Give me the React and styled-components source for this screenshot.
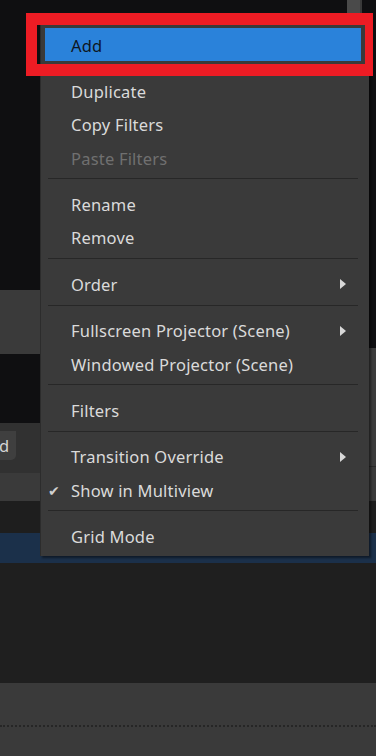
import React from 'react'
import styled, { createGlobalStyle } from 'styled-components'

const Global = createGlobalStyle`
  html, body {
    margin: 0;
    padding: 0;
    background: #0f0f11;
  }
  body {
    font-family: "Noto Sans", "Open Sans", sans-serif;
    overflow: hidden;
  }
`

const Screen = styled.div`
  position: relative;
  width: 376px;
  height: 756px;
  overflow: hidden;
  display: flex;
  flex-direction: column;
  background: #0f0f11;
`

const Docks = styled.div`
  display: flex;
  height: 503px;
`

const Column = styled.div`
  display: flex;
  flex-direction: column;
  width: ${p => p.width}px;
  flex: ${p => (p.width ? 'none' : 1)};
`

const Block = styled.div`
  height: ${p => (p.h ? `${p.h}px` : 'auto')};
  flex: ${p => (p.h ? 'none' : 1)};
  background: ${p => p.bg};
  border-bottom: ${p => (p.line ? '1px solid #2a2a2a' : 'none')};
  box-sizing: border-box;
`

const ScrollTrack = styled.div`
  height: 13px;
  display: flex;
  justify-content: flex-end;
  padding-right: 7px;
`

const ScrollThumb = styled.div`
  width: 13px;
  background: #4a4a4a;
  border-right: 2px solid #3a3a3a;
`

const DockBar = styled.div`
  height: 50px;
  background: #313131;
  padding-top: 8px;
  box-sizing: border-box;
`

const DockButton = styled.div`
  width: 16px;
  height: 29px;
  background: #3f3f3f;
  border-radius: 0 0 5px 0;
  color: #d4d4d4;
  font-size: 16.5px;
  line-height: 29px;
  text-indent: -1px;
  overflow: hidden;
`

const Row = styled.div`
  height: ${p => p.h}px;
  flex: none;
  background: ${p => p.bg};
  border-bottom: ${p => (p.dashed ? '2px dotted #262626' : 'none')};
`

const Menu = styled.div`
  position: absolute;
  left: 40px;
  top: 25px;
  width: 329px;
  padding: 3px 0 3.3px;
  box-sizing: border-box;
  background: #3a3a3a;
  border-left: 1px solid #2c2c2c;
  box-shadow: 2px 2px 2px rgba(0, 0, 0, 0.45);
  display: flex;
  flex-direction: column;
`

const Item = styled.div`
  position: relative;
  height: 33.36px;
  margin: 0 8px 0 4px;
  padding: 1px 0 0 26px;
  box-sizing: border-box;
  display: flex;
  align-items: center;
  font-size: 16.5px;
  letter-spacing: 0.2px;
  color: ${p => (p.disabled ? '#707070' : p.active ? '#0e1622' : '#dadada')};
  background: ${p => (p.active ? '#2a82da' : 'transparent')};
  white-space: nowrap;
`

const Check = styled.span`
  position: absolute;
  left: 3px;
  top: 50%;
  transform: translateY(-50%);
  font-size: 14px;
  color: #d0d0d0;
`

const Arrow = styled.span`
  position: absolute;
  right: 15px;
  top: 50%;
  margin-top: -4.5px;
  width: 0;
  height: 0;
  border-top: 5px solid transparent;
  border-bottom: 5px solid transparent;
  border-left: 6px solid #d8d8d8;
`

const Separator = styled.div`
  height: 13px;
  margin: 0 11px 0 7px;
  box-sizing: border-box;
  padding-top: 4px;
  &::after {
    content: '';
    display: block;
    height: 1px;
    background: #272727;
  }
`

const Highlight = styled.div`
  position: absolute;
  left: 26px;
  top: 13px;
  width: 347px;
  height: 63px;
  box-sizing: border-box;
  border-style: solid;
  border-color: #ed1c24;
  border-width: 12px 8px 12px 11px;
  pointer-events: none;
`

const menu = [
  { label: 'Add', active: true },
  'sep',
  { label: 'Duplicate' },
  { label: 'Copy Filters' },
  { label: 'Paste Filters', disabled: true },
  'sep',
  { label: 'Rename' },
  { label: 'Remove' },
  'sep',
  { label: 'Order', sub: true },
  'sep',
  { label: 'Fullscreen Projector (Scene)', sub: true },
  { label: 'Windowed Projector (Scene)' },
  'sep',
  { label: 'Filters' },
  'sep',
  { label: 'Transition Override', sub: true },
  { label: 'Show in Multiview', checked: true },
  'sep',
  { label: 'Grid Mode' },
]

export default function App() {
  return (
    <Screen>
      <Global />
      <Docks>
        <Column width={40}>
          <Block h={290} bg="#0f0f11" />
          <Block h={64} bg="#3a3a3a" />
          <Block h={69} bg="#0f0f11" />
          <DockBar>
            <DockButton>d</DockButton>
          </DockBar>
          <Block bg="#3a3a3a" />
        </Column>
        <Column>
          <ScrollTrack>
            <ScrollThumb />
          </ScrollTrack>
          <Block bg="#0f0f11" />
        </Column>
        <Column width={7}>
          <Block h={348} bg="#0f0f11" />
          <Block h={119} bg="#3c3c3c" line />
          <Block bg="#3a3a3a" />
        </Column>
      </Docks>
      <Row h={32} bg="#1e1e1e" />
      <Row h={30} bg="#1b304a" />
      <Row h={120} bg="#1f1f1f" />
      <Row h={42} bg="#3a3a3a" dashed />
      <Row h={29} bg="#3a3a3a" />

      <Menu>
        {menu.map((m, i) =>
          m === 'sep' ? (
            <Separator key={i} />
          ) : (
            <Item key={i} active={m.active} disabled={m.disabled}>
              {m.checked && <Check>✔</Check>}
              {m.label}
              {m.sub && <Arrow />}
            </Item>
          )
        )}
      </Menu>
      <Highlight />
    </Screen>
  )
}
